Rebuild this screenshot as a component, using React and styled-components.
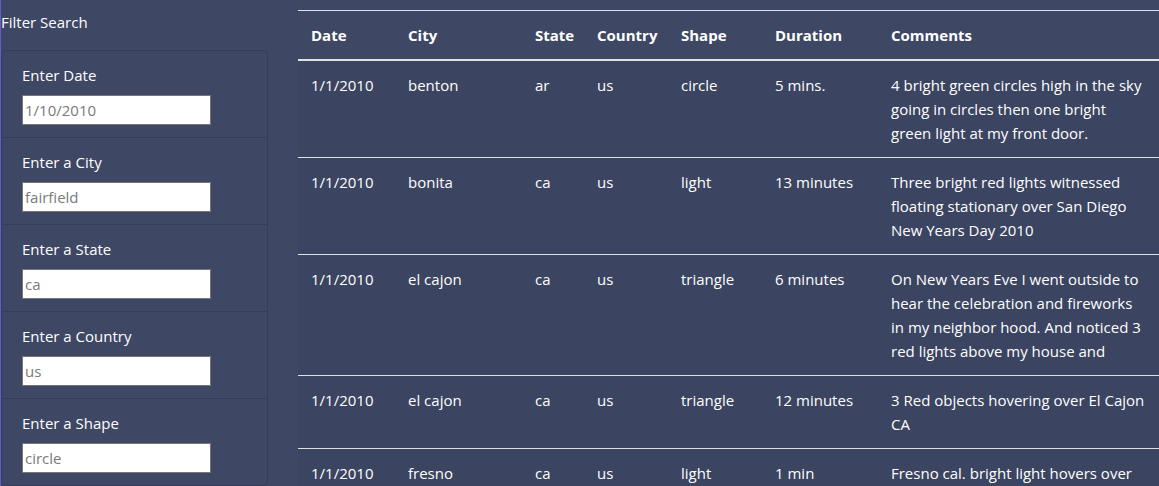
import React from "react";
import styled, { createGlobalStyle } from "styled-components";

const Global = createGlobalStyle`
  html, body { margin: 0; padding: 0; }
  body {
    background: #3e4763;
    color: #ffffff;
    font-family: "Open Sans", "Noto Sans", sans-serif;
    overflow: hidden;
  }
`;

const Page = styled.div`
  display: flex;
  align-items: flex-start;
  height: 486px;
  border-left: 1px solid #6a5acd;
  box-sizing: border-box;
`;

const Sidebar = styled.aside`
  width: 267px;
  flex: none;
`;

const Title = styled.div`
  font-size: 15px;
  line-height: 20px;
  padding: 12px 0 18px 0;
`;

const FilterList = styled.ul`
  list-style: none;
  margin: 0;
  padding: 0;
  border: 1px solid #353e57;
  border-radius: 4px;
`;

const FilterItem = styled.li`
  padding: 12px 20px 12px 20px;
  border-top: ${(p) => (p.$first ? "none" : "1px solid #353e57")};
`;

const Label = styled.label`
  display: block;
  font-size: 15px;
  line-height: 24px;
  margin-bottom: 8px;
`;

const Input = styled.input`
  display: block;
  box-sizing: border-box;
  width: 189px;
  height: 30px;
  padding: 1px 2px;
  border: 1px solid #767676;
  background: #fff;
  font-family: inherit;
  font-size: 15px;
  &::placeholder { color: #7a7a7a; }
`;

const TableWrap = styled.div`
  margin: 10px 0 0 30px;
  flex: 1;
`;

const Table = styled.table`
  width: 861px;
  border-collapse: collapse;
  table-layout: fixed;
  font-size: 15px;
  line-height: 24px;
  border-top: 1px solid #dee2e6;
`;

const Th = styled.th`
  text-align: left;
  font-weight: 700;
  padding: 12px 13px;
  border-bottom: 2px solid #dee2e6;
  vertical-align: bottom;
`;

const Td = styled.td`
  padding: 12px 13px;
  vertical-align: top;
  border-top: 1px solid #dee2e6;
`;

const Row = styled.tr`
  background: #3b4460;
`;

const filters = [
  ["Enter Date", "1/10/2010"],
  ["Enter a City", "fairfield"],
  ["Enter a State", "ca"],
  ["Enter a Country", "us"],
  ["Enter a Shape", "circle"],
];

const cols = [
  ["Date", 97],
  ["City", 127],
  ["State", 62],
  ["Country", 84],
  ["Shape", 94],
  ["Duration", 116],
  ["Comments", 281],
];

const rows = [
  ["1/1/2010", "benton", "ar", "us", "circle", "5 mins.", "4 bright green circles high in the sky going in circles then one bright green light at my front door."],
  ["1/1/2010", "bonita", "ca", "us", "light", "13 minutes", "Three bright red lights witnessed floating stationary over San Diego New Years Day 2010"],
  ["1/1/2010", "el cajon", "ca", "us", "triangle", "6 minutes", "On New Years Eve I went outside to hear the celebration and fireworks in my neighbor hood. And noticed 3 red lights above my house and"],
  ["1/1/2010", "el cajon", "ca", "us", "triangle", "12 minutes", "3 Red objects hovering over El Cajon CA"],
  ["1/1/2010", "fresno", "ca", "us", "light", "1 min", "Fresno cal. bright light hovers over"],
];

export default function App() {
  return (
    <>
      <Global />
      <Page>
        <Sidebar>
          <Title>Filter Search</Title>
          <FilterList>
            {filters.map(([label, ph], i) => (
              <FilterItem key={label} $first={i === 0}>
                <Label>{label}</Label>
                <Input type="text" placeholder={ph} />
              </FilterItem>
            ))}
          </FilterList>
        </Sidebar>
        <TableWrap>
          <Table>
            <colgroup>
              {cols.map(([n, w]) => (
                <col key={n} style={{ width: w }} />
              ))}
            </colgroup>
            <thead>
              <tr>
                {cols.map(([n]) => (
                  <Th key={n}>{n}</Th>
                ))}
              </tr>
            </thead>
            <tbody>
              {rows.map((r, i) => (
                <Row key={i}>
                  {r.map((c, j) => (
                    <Td key={j}>{c}</Td>
                  ))}
                </Row>
              ))}
            </tbody>
          </Table>
        </TableWrap>
      </Page>
    </>
  );
}
